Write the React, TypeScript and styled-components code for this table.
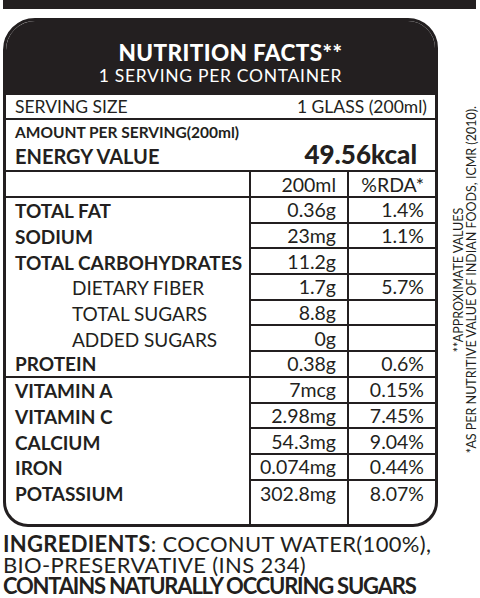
import React from 'react';
import styled, { createGlobalStyle } from 'styled-components';

const ink = '#231f20';

const GlobalStyle = createGlobalStyle`
  body {
    margin: 0;
    background: #ffffff;
    color: ${ink};
    font-family: Lato, "Open Sans", sans-serif;
  }
`;

type Nutrient = { label: string; amount: string; rda: string; kind: 'bold' | 'sub' };

const mainRows: Nutrient[] = [
  { label: 'TOTAL FAT', amount: '0.36g', rda: '1.4%', kind: 'bold' },
  { label: 'SODIUM', amount: '23mg', rda: '1.1%', kind: 'bold' },
  { label: 'TOTAL CARBOHYDRATES', amount: '11.2g', rda: '', kind: 'bold' },
  { label: 'DIETARY FIBER', amount: '1.7g', rda: '5.7%', kind: 'sub' },
  { label: 'TOTAL SUGARS', amount: '8.8g', rda: '', kind: 'sub' },
  { label: 'ADDED SUGARS', amount: '0g', rda: '', kind: 'sub' },
  { label: 'PROTEIN', amount: '0.38g', rda: '0.6%', kind: 'bold' },
];

const mineralRows: Nutrient[] = [
  { label: 'VITAMIN A', amount: '7mcg', rda: '0.15%', kind: 'bold' },
  { label: 'VITAMIN C', amount: '2.98mg', rda: '7.45%', kind: 'bold' },
  { label: 'CALCIUM', amount: '54.3mg', rda: '9.04%', kind: 'bold' },
  { label: 'IRON', amount: '0.074mg', rda: '0.44%', kind: 'bold' },
  { label: 'POTASSIUM', amount: '302.8mg', rda: '8.07%', kind: 'bold' },
];

const NutritionLabel: React.FC = () => {
  const renderGroup = (rows: Nutrient[], closed: boolean) =>
    rows.map((r, i) => {
      const last = i === rows.length - 1;
      return (
        <Row key={r.label} $divider={closed && last}>
          <Label $kind={r.kind}>{r.label}</Label>
          <Value $line={!last}>{r.amount}</Value>
          <Value $line={!last}>{r.rda}</Value>
        </Row>
      );
    });

  return (
    <>
      <GlobalStyle />
      <Page>
        <TopBar />
        <Main>
          <LabelBox>
            <Header>
              <Title>NUTRITION FACTS**</Title>
              <Subtitle>1 SERVING PER CONTAINER</Subtitle>
            </Header>
            <ServingRow>
              <span>SERVING SIZE</span>
              <span>1 GLASS (200ml)</span>
            </ServingRow>
            <AmountBlock>
              <AmountCaption>AMOUNT PER SERVING(200ml)</AmountCaption>
              <EnergyRow>
                <EnergyLabel>ENERGY VALUE</EnergyLabel>
                <EnergyValue>49.56kcal</EnergyValue>
              </EnergyRow>
            </AmountBlock>
            <Row $divider $head>
              <Label $kind="sub" />
              <Value>200ml</Value>
              <Value>%RDA*</Value>
            </Row>
            {renderGroup(mainRows, true)}
            {renderGroup(mineralRows, false)}
            <Filler>
              <span />
              <Value />
              <Value />
            </Filler>
          </LabelBox>
          <Side>
            <SideNote>
              **APPROXIMATE VALUES
              <br />
              *AS PER NUTRITIVE VALUE OF INDIAN FOODS, ICMR (2010).
            </SideNote>
          </Side>
        </Main>
        <Ingredients>
          <IngLine>
            <strong>INGREDIENTS</strong>: COCONUT WATER(100%),
          </IngLine>
          <IngLine>BIO-PRESERVATIVE (INS 234)</IngLine>
          <IngLine $bold>CONTAINS NATURALLY OCCURING SUGARS</IngLine>
        </Ingredients>
      </Page>
    </>
  );
};

const Page = styled.div`
  width: 480px;
  height: 598px;
  padding-left: 3px;
  box-sizing: border-box;
  overflow: hidden;
`;

const TopBar = styled.div`
  width: 473px;
  height: 9px;
  background: ${ink};
`;

const Main = styled.div`
  display: flex;
  margin-top: 9px;
`;

const LabelBox = styled.div`
  width: 435px;
  flex-shrink: 0;
  border: 3px solid ${ink};
  border-radius: 32px 30px 25px 25px;
  overflow: hidden;
  box-sizing: border-box;
`;

const Header = styled.div`
  height: 74px;
  background: ${ink};
  color: #ffffff;
  text-align: center;
  padding-top: 19px;
  box-sizing: border-box;
`;

const Title = styled.div`
  font-size: 22.5px;
  font-weight: 900;
  line-height: 25px;
  letter-spacing: 0.4px;
  padding-left: 20px;
`;

const Subtitle = styled.div`
  font-size: 17.5px;
  line-height: 22px;
  letter-spacing: 0.7px;
`;

const ServingRow = styled.div`
  height: 25px;
  display: flex;
  justify-content: space-between;
  align-items: center;
  padding: 0 8px 0 9px;
  border-bottom: 2px solid ${ink};
  box-sizing: border-box;
  font-size: 17.5px;
`;

const AmountBlock = styled.div`
  height: 52px;
  padding: 3px 18px 0 9px;
  border-bottom: 2px solid ${ink};
  box-sizing: border-box;
`;

const AmountCaption = styled.div`
  font-size: 15.5px;
  font-weight: 700;
  line-height: 18px;
`;

const EnergyRow = styled.div`
  display: flex;
  justify-content: space-between;
  align-items: baseline;
  line-height: 27px;
`;

const EnergyLabel = styled.span`
  font-size: 20px;
  font-weight: 700;
`;

const EnergyValue = styled.span`
  font-size: 26px;
  font-weight: 900;
`;

const Row = styled.div<{ $divider?: boolean; $head?: boolean }>`
  display: grid;
  grid-template-columns: 1fr 98px 88px;
  height: ${({ $head }) => ($head ? '26px' : '25.7px')};
  border-bottom: ${({ $divider }) => ($divider ? `2px solid ${ink}` : 'none')};
  box-sizing: border-box;
  font-size: 19.5px;
`;

const Filler = styled(Row)`
  height: 17.5px;
`;

const Label = styled.div<{ $kind: 'bold' | 'sub' }>`
  display: flex;
  align-items: center;
  padding-left: ${({ $kind }) => ($kind === 'sub' ? '66px' : '9px')};
  font-size: 19px;
  font-weight: ${({ $kind }) => ($kind === 'sub' ? 400 : 700)};
  white-space: nowrap;
`;

const Value = styled.div<{ $line?: boolean }>`
  display: flex;
  align-items: center;
  justify-content: flex-end;
  padding-right: 11px;
  border-left: 2px solid ${ink};
  border-bottom: ${({ $line }) => ($line ? `2px solid ${ink}` : 'none')};
  box-sizing: border-box;
  white-space: nowrap;
`;

const Side = styled.div`
  flex: 1;
  display: flex;
  align-items: center;
  padding: 14px 0 0 15px;
`;

const SideNote = styled.div`
  writing-mode: vertical-rl;
  transform: rotate(180deg);
  text-align: center;
  font-size: 12.5px;
  line-height: 12.5px;
  white-space: nowrap;
`;

const Ingredients = styled.div`
  margin-top: 6px;
  font-size: 22px;
  line-height: 21px;
  white-space: nowrap;
`;

const IngLine = styled.div<{ $bold?: boolean }>`
  letter-spacing: ${({ $bold }) => ($bold ? '-1.2px' : '0.35px')};
  font-weight: ${({ $bold }) => ($bold ? 700 : 400)};

  strong {
    font-weight: 700;
    letter-spacing: 0.3px;
  }
`;

export default NutritionLabel;
